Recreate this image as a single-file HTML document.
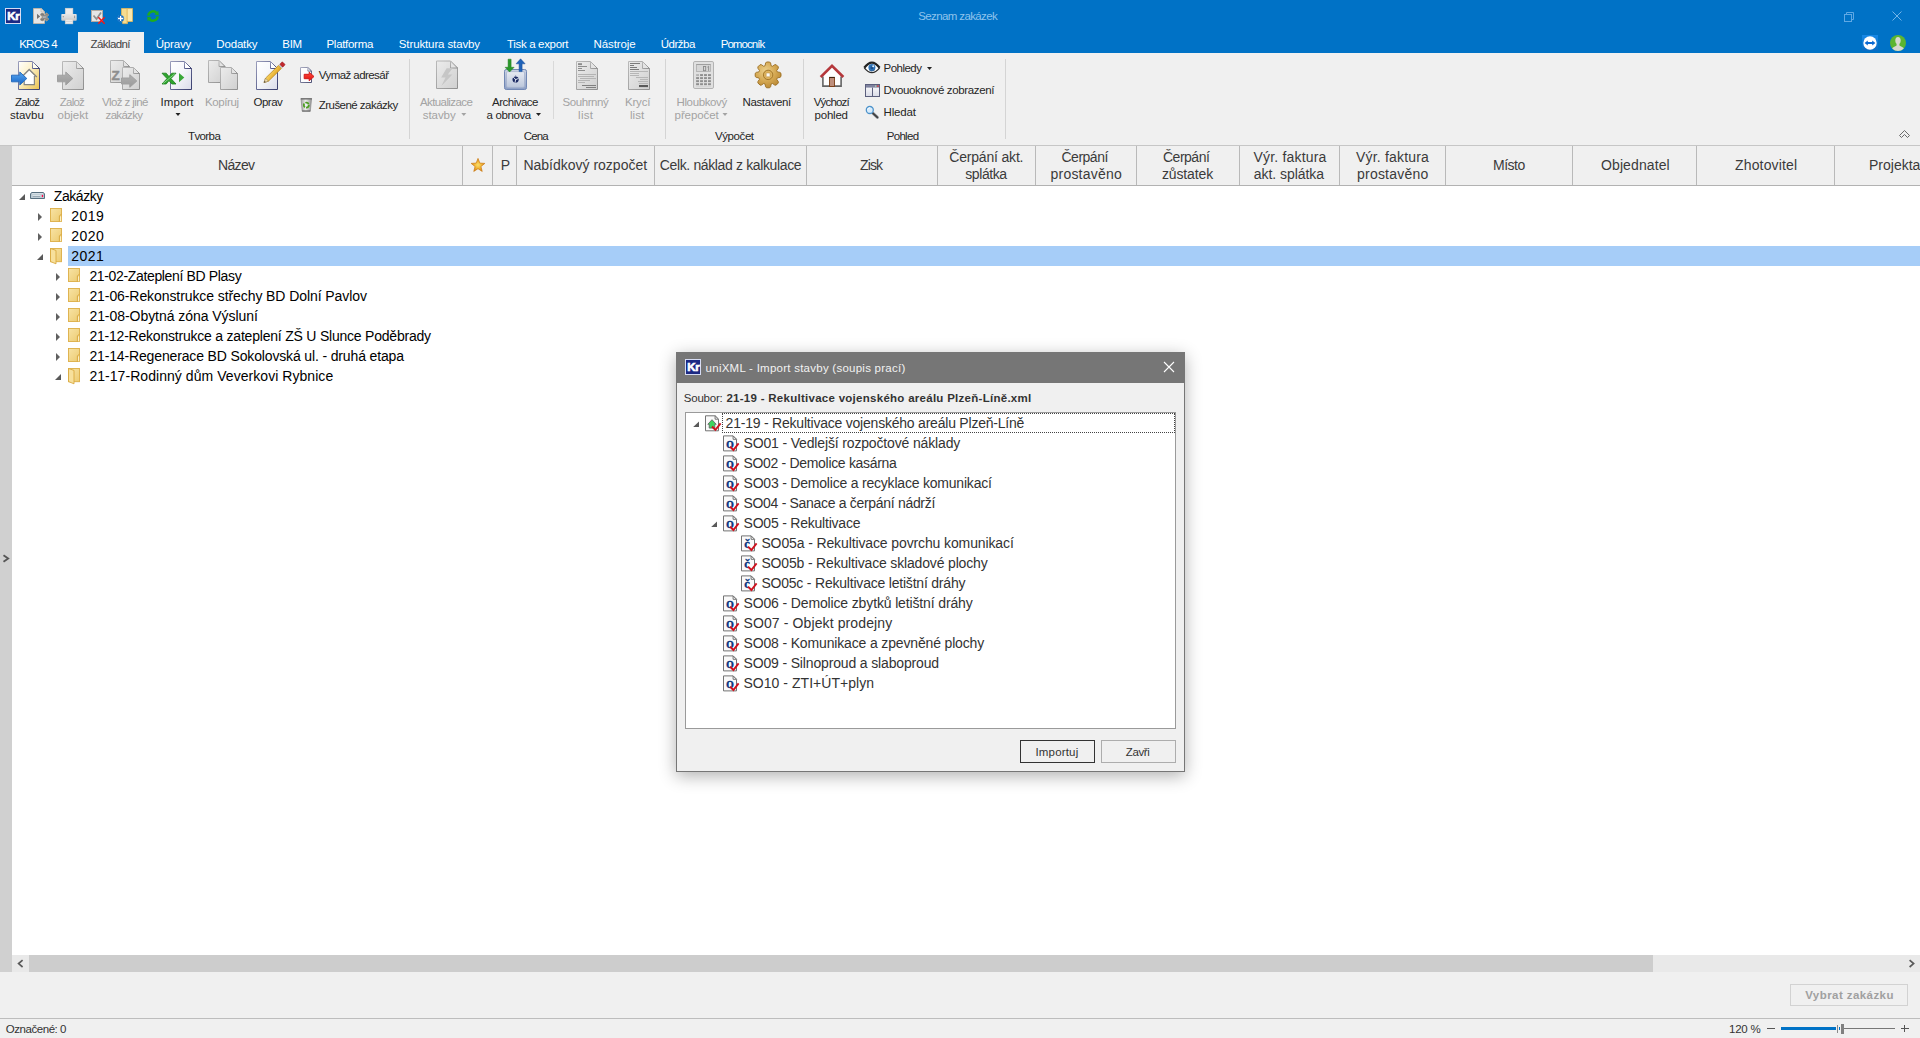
<!DOCTYPE html>
<html><head><meta charset="utf-8"><title>KROS 4</title>
<style>html,body{margin:0;padding:0;width:1920px;height:1038px;overflow:hidden;background:#f0f0f0;font-family:'Liberation Sans',sans-serif}</style>
</head><body>
<div style="position:relative;width:1920px;height:1038px;overflow:hidden">
<div style="position:absolute;left:0px;top:0px;width:1920px;height:53px;background:#0072c6;"></div>
<div style="position:absolute;left:0px;top:53px;width:1920px;height:92px;background:#f0f0f0;"></div>
<div style="position:absolute;left:0px;top:145px;width:1920px;height:1px;background:#c6c6c6;"></div>
<div style="position:absolute;left:78px;top:32px;width:66px;height:21px;background:#f0f0f0;"></div>
<div style="position:absolute;left:0px;top:146px;width:1920px;height:39px;background:#f0f0f0;"></div>
<div style="position:absolute;left:0px;top:185px;width:1920px;height:1px;background:#b2b2b2;"></div>
<div style="position:absolute;left:12px;top:186px;width:1908px;height:769px;background:#ffffff;"></div>
<div style="position:absolute;left:0px;top:146px;width:12px;height:826px;background:#d0d0d0;"></div>
<div style="position:absolute;left:68px;top:246px;width:1852px;height:20px;background:#a6cdf8;"></div>
<div style="position:absolute;left:12px;top:955px;width:1908px;height:17px;background:#e9e9e9;"></div>
<div style="position:absolute;left:29px;top:955px;width:1624px;height:17px;background:#cdcdcd;"></div>
<div style="position:absolute;left:0px;top:972px;width:1920px;height:46px;background:#f0f0f0;"></div>
<div style="position:absolute;left:0px;top:1018px;width:1920px;height:1px;background:#bdbdbd;"></div>
<div style="position:absolute;left:0px;top:1019px;width:1920px;height:19px;background:#f0f0f0;"></div>
<div style="position:absolute;left:409px;top:59px;width:1px;height:80px;background:#d4d4d4;"></div>
<div style="position:absolute;left:665px;top:59px;width:1px;height:80px;background:#d4d4d4;"></div>
<div style="position:absolute;left:803px;top:59px;width:1px;height:80px;background:#d4d4d4;"></div>
<div style="position:absolute;left:1005px;top:59px;width:1px;height:80px;background:#d4d4d4;"></div>
<div style="position:absolute;left:553px;top:61px;width:1px;height:58px;background:#d9d9d9;"></div>
<div style="position:absolute;left:462px;top:146px;width:1px;height:39px;background:#b9b9b9;"></div>
<div style="position:absolute;left:492px;top:146px;width:1px;height:39px;background:#b9b9b9;"></div>
<div style="position:absolute;left:516px;top:146px;width:1px;height:39px;background:#b9b9b9;"></div>
<div style="position:absolute;left:654px;top:146px;width:1px;height:39px;background:#b9b9b9;"></div>
<div style="position:absolute;left:806px;top:146px;width:1px;height:39px;background:#b9b9b9;"></div>
<div style="position:absolute;left:937px;top:146px;width:1px;height:39px;background:#b9b9b9;"></div>
<div style="position:absolute;left:1035px;top:146px;width:1px;height:39px;background:#b9b9b9;"></div>
<div style="position:absolute;left:1136px;top:146px;width:1px;height:39px;background:#b9b9b9;"></div>
<div style="position:absolute;left:1239px;top:146px;width:1px;height:39px;background:#b9b9b9;"></div>
<div style="position:absolute;left:1339px;top:146px;width:1px;height:39px;background:#b9b9b9;"></div>
<div style="position:absolute;left:1445px;top:146px;width:1px;height:39px;background:#b9b9b9;"></div>
<div style="position:absolute;left:1572px;top:146px;width:1px;height:39px;background:#b9b9b9;"></div>
<div style="position:absolute;left:1696px;top:146px;width:1px;height:39px;background:#b9b9b9;"></div>
<div style="position:absolute;left:1834px;top:146px;width:1px;height:39px;background:#b9b9b9;"></div>
<div style="position:absolute;left:1790px;top:984px;width:118px;height:22px;background:#f0f0f0;box-sizing:border-box;border:1px solid #d2d2d2"></div>
<div style="position:absolute;left:1767px;top:1028px;width:8px;height:1px;background:#555;"></div>
<div style="position:absolute;left:1781px;top:1027px;width:55px;height:3px;background:#0072c6;"></div>
<div style="position:absolute;left:1837px;top:1025px;width:1px;height:8px;background:#8a8a8a;"></div>
<div style="position:absolute;left:1839px;top:1027px;width:1px;height:3px;background:#0072c6;"></div>
<div style="position:absolute;left:1841px;top:1024px;width:3px;height:10px;background:#808080;"></div>
<div style="position:absolute;left:1844px;top:1028px;width:51px;height:1px;background:#777;"></div>
<div style="position:absolute;left:1901px;top:1028px;width:8px;height:1px;background:#555;"></div>
<div style="position:absolute;left:1904px;top:1025px;width:1px;height:7px;background:#555;"></div>
<svg style="position:absolute;left:0px;top:0px" width="1920" height="1038" viewBox="0 0 1920 1038"><defs>
<linearGradient id="gDoc" x1="0" y1="0" x2="1" y2="1"><stop offset="0" stop-color="#ffffff"/><stop offset="0.45" stop-color="#f6f7fb"/><stop offset="1" stop-color="#dadcea"/></linearGradient>
<linearGradient id="gGray" x1="0" y1="0" x2="1" y2="1"><stop offset="0" stop-color="#ececec"/><stop offset="1" stop-color="#d0d0d0"/></linearGradient>
<linearGradient id="gYel" x1="0" y1="0" x2="1" y2="1"><stop offset="0" stop-color="#ffffff"/><stop offset="0.4" stop-color="#fdf2cc"/><stop offset="1" stop-color="#ebc24e"/></linearGradient>
<linearGradient id="gBlueA" x1="0" y1="0" x2="0" y2="1"><stop offset="0" stop-color="#58a9f2"/><stop offset="1" stop-color="#1763c6"/></linearGradient>
<linearGradient id="gGrayA" x1="0" y1="0" x2="0" y2="1"><stop offset="0" stop-color="#b0b0b0"/><stop offset="1" stop-color="#9a9a9a"/></linearGradient>
<linearGradient id="gFold" x1="0" y1="0" x2="1" y2="1"><stop offset="0" stop-color="#f8e3a4"/><stop offset="1" stop-color="#eccb72"/></linearGradient>
<linearGradient id="gBox" x1="0" y1="0" x2="0" y2="1"><stop offset="0" stop-color="#cbd3e3"/><stop offset="1" stop-color="#8c9fc5"/></linearGradient>
<linearGradient id="gBox2" x1="0" y1="0" x2="0" y2="1"><stop offset="0" stop-color="#e6eaf2"/><stop offset="1" stop-color="#bcc7db"/></linearGradient>
<radialGradient id="gGear" cx="0.4" cy="0.35" r="0.75"><stop offset="0" stop-color="#ecd08c"/><stop offset="0.55" stop-color="#d3a650"/><stop offset="1" stop-color="#b48330"/></radialGradient>
<radialGradient id="gStar" cx="0.5" cy="0.5" r="0.55"><stop offset="0" stop-color="#f9de6c"/><stop offset="0.45" stop-color="#f2b83a"/><stop offset="1" stop-color="#d17c10"/></radialGradient>
<linearGradient id="gTrash" x1="0" y1="0" x2="1" y2="0"><stop offset="0" stop-color="#a4a4a4"/><stop offset="0.45" stop-color="#ededed"/><stop offset="1" stop-color="#969696"/></linearGradient>
<linearGradient id="gPen" x1="0" y1="0" x2="1" y2="1"><stop offset="0" stop-color="#fbd86a"/><stop offset="1" stop-color="#e2a520"/></linearGradient>
<linearGradient id="gTV" x1="0" y1="0" x2="0" y2="1"><stop offset="0" stop-color="#1788e6"/><stop offset="1" stop-color="#0a6cc2"/></linearGradient>
<linearGradient id="gSD" x1="0" y1="0" x2="1" y2="1"><stop offset="0" stop-color="#9c9fbd"/><stop offset="0.6" stop-color="#5a5f8c"/><stop offset="1" stop-color="#3a3f6e"/></linearGradient>
<linearGradient id="gSG" x1="0" y1="0" x2="1" y2="1"><stop offset="0" stop-color="#bababa"/><stop offset="1" stop-color="#8f8f8f"/></linearGradient>
<linearGradient id="gPane" x1="0" y1="0" x2="0" y2="1"><stop offset="0" stop-color="#ffffff"/><stop offset="1" stop-color="#d9dbe7"/></linearGradient>
<linearGradient id="gRed" x1="0" y1="0" x2="0" y2="1"><stop offset="0" stop-color="#ff4a3a"/><stop offset="1" stop-color="#e01212"/></linearGradient>
<linearGradient id="gSD2" x1="0" y1="0" x2="1" y2="1"><stop offset="0" stop-color="#a9abc0"/><stop offset="1" stop-color="#4e5276"/></linearGradient>
<linearGradient id="gPrn" x1="0" y1="0" x2="0" y2="1"><stop offset="0" stop-color="#e6e6e6"/><stop offset="0.55" stop-color="#dadada"/><stop offset="1" stop-color="#c6c6c6"/></linearGradient>
</defs><rect x="5" y="8" width="16" height="16" fill="#d5dbf3"/><rect x="6" y="9" width="14" height="14" fill="#1b2883"/><text x="7.2" y="20.4" style="font-family:'Liberation Sans',sans-serif;font-size:11.5px;font-weight:700;letter-spacing:-0.3px" fill="#fff" stroke="#fff" stroke-width="0.7">Kr</text><path d="M33.5 8.5H41.1L44.5 11.9V23.5H33.5Z" fill="#e6e6e6" stroke="#c4b5a6" stroke-width="0.9" stroke-linejoin="round"/><path d="M41.1 8.5V11.9H44.5Z" fill="#f4f4f4" stroke="#c4b5a6" stroke-width="0.9" stroke-linejoin="round"/><path d="M37 13.8L40.2 16.4L37 19Z" fill="#737373"/><path d="M41.2 13.8L47.8 20.2M47.8 13.8L41.2 20.2" stroke="#c9b08e" stroke-width="3.6"/><path d="M41.2 13.8L47.8 20.2M47.8 13.8L41.2 20.2" stroke="#858585" stroke-width="2.3"/><path d="M40.6 14.2H44M40.6 19.8H44" stroke="#7d7d7d" stroke-width="1.4"/><path d="M42.6 16.2L46.4 18.2M42.6 18L46.4 15.8" stroke="#c8d0d8" stroke-width="0.6"/><rect x="65.2" y="8.2" width="7.7" height="6" fill="#ececec" stroke="#d9cfc6" stroke-width="0.5"/><rect x="61.3" y="13.9" width="15.4" height="6.9" rx="0.8" fill="url(#gPrn)"/><rect x="62.8" y="16" width="0.9" height="1.3" fill="#8a8a8a"/><rect x="74.2" y="15.6" width="0.9" height="2.6" fill="#8f8f8f"/><rect x="65.2" y="19.6" width="7.7" height="4.3" fill="#efefef" stroke="#d9cfc6" stroke-width="0.5"/><path d="M65.6 21.4H72.6" stroke="#cfcfcf" stroke-width="0.7"/><rect x="91.5" y="10.5" width="11" height="11" fill="#e6e6e6" stroke="#b3aaa2"/><path d="M93.5 15.5L96.5 19L101 12.5" fill="none" stroke="#909090" stroke-width="1.7"/><path d="M98.3 17.3L104.7 23.7M104.7 17.3L98.3 23.7" stroke="#f01818" stroke-width="1.5"/><path d="M121.5 8.5H132.5V21.5H127.5V23.6H122.6V21.5H121.5Z" fill="#f6dc8f" stroke="#e3b95a" stroke-width="0.8"/><path d="M127.2 9V23" stroke="#dcae4c" stroke-width="0.9"/><path d="M127.7 9.2H132V21H127.7Z" fill="#fae8ad"/><circle cx="120.6" cy="18.5" r="3.3" fill="#0c66be" stroke="#6aaae6" stroke-width="0.6" stroke-dasharray="0.9 0.9"/><path d="M118 18.5H123.2M120.6 15.9V21.1" stroke="#fff" stroke-width="1.3"/><g fill="none" stroke="#1eac1e" stroke-width="2.4"><path d="M148.32 15.59A4.7 4.7 0 0 1 156.49 12.86"/><path d="M157.68 16.41A4.7 4.7 0 0 1 149.51 19.14"/></g><path d="M158.32 10.86L158.74 15.18L154.44 14.61Z" fill="#1eac1e"/><path d="M147.68 21.14L147.26 16.82L151.56 17.39Z" fill="#1eac1e"/><g fill="none" stroke="#5fa8e4" stroke-width="1"><rect x="1844.5" y="14.5" width="7" height="7"/><path d="M1846.5 14.5V12.5H1853.5V19.5H1851.5"/></g><path d="M1892.5 11.5L1901.5 20.5M1901.5 11.5L1892.5 20.5" stroke="#74b4e8" stroke-width="1"/><rect x="1862" y="35" width="16" height="16" fill="url(#gTV)"/><circle cx="1870" cy="43" r="6.7" fill="#fff"/><path d="M1864.6 43L1867.8 40.6V42.1H1872.2V40.6L1875.4 43L1872.2 45.4V43.9H1867.8V45.4Z" fill="#0b6ad2"/><circle cx="1898" cy="43" r="8" fill="#5bb431"/><clipPath id="cu"><circle cx="1898" cy="43" r="8"/></clipPath><g clip-path="url(#cu)" fill="#d8d8d0"><ellipse cx="1898" cy="40.6" rx="2.7" ry="3.5"/><path d="M1896.6 43V45.6C1895 46.6 1892.6 47 1891.8 49.4V52H1904.2V49.4C1903.4 47 1901 46.6 1899.4 45.6V43Z"/></g><g fill="none" stroke="#5a5a5a" stroke-width="0.9"><path d="M1899.5 135.5L1904.5 130.5L1909.5 135.5"/><path d="M1901.5 137.5L1904.5 134.5L1907.5 137.5"/><path d="M1899.5 135.5L1901.5 137.5M1909.5 135.5L1907.5 137.5"/></g><path d="M18.5 61.5H32.5L39.5 68.5V89.5H18.5Z" fill="url(#gYel)" stroke="url(#gSD)" stroke-width="1" stroke-linejoin="round"/><path d="M32.5 61.5V68.5H39.5Z" fill="#fffdf0" stroke="url(#gSD)" stroke-width="1" stroke-linejoin="round"/><path d="M24.2 75.6V84.6H34.4V75.6L29.2 70.4Z" fill="#fff"/><path d="M24.2 76V84.6H34.4V76" fill="none" stroke="#858585" stroke-width="1.2"/><path d="M23.2 75.6L29.2 69.4L36.8 77" fill="none" stroke="#858585" stroke-width="1.4"/><path d="M11.5 75.2H19.8V72.0L26.8 78.5L19.8 85.0V81.8H11.5Z" fill="url(#gBlueA)" stroke="#2a6fc0" stroke-width="1" stroke-linejoin="round"/><path d="M62.5 61.5H76.5L83.5 68.5V89.5H62.5Z" fill="url(#gGray)" stroke="url(#gSG)" stroke-width="1" stroke-linejoin="round"/><path d="M76.5 61.5V68.5H83.5Z" fill="#e4e4e4" stroke="url(#gSG)" stroke-width="1" stroke-linejoin="round"/><path d="M57.5 75.2H65.8V72.0L72.8 78.5L65.8 85.0V81.8H57.5Z" fill="url(#gGrayA)" stroke="#a0a0a0" stroke-width="1" stroke-linejoin="round"/><path d="M110.5 60.5H123.5L129.5 66.5V82.5H110.5Z" fill="url(#gGray)" stroke="url(#gSG)" stroke-width="1" stroke-linejoin="round"/><path d="M123.5 60.5V66.5H129.5Z" fill="#e4e4e4" stroke="url(#gSG)" stroke-width="1" stroke-linejoin="round"/><text x="111.4" y="80.2" style="font-family:'Liberation Sans',sans-serif;font-size:13.5px;font-weight:700" fill="#8e8e8e" stroke="#8e8e8e" stroke-width="0.4">Z</text><path d="M122.5 67.5H133.5L139.5 73.5V89.5H122.5Z" fill="url(#gGray)" stroke="url(#gSG)" stroke-width="1" stroke-linejoin="round"/><path d="M133.5 67.5V73.5H139.5Z" fill="#e4e4e4" stroke="url(#gSG)" stroke-width="1" stroke-linejoin="round"/><path d="M121.5 78H129.8V74.7L136.8 81L129.8 87.3V84H121.5Z" fill="url(#gGrayA)" stroke="#a0a0a0" stroke-width="1" stroke-linejoin="round"/><path d="M170.5 61.5H184.5L191.5 68.5V89.5H170.5Z" fill="url(#gDoc)" stroke="url(#gSD)" stroke-width="1" stroke-linejoin="round"/><path d="M184.5 61.5V68.5H191.5Z" fill="#ffffff" stroke="url(#gSD)" stroke-width="1" stroke-linejoin="round"/><path d="M162 73.2H166.2L169 76.6L171.8 73.2H176L171 78.6L176 84H171.8L169 80.6L166.2 84H162L167 78.6Z" fill="#2fa52f" stroke="#1b7d1b" stroke-width="0.8"/><path d="M163.2 83.4L174.8 73.8" stroke="#8fd98f" stroke-width="0.9"/><path d="M179 73L184.3 77.6L179 82.2Z" fill="#3aa83a"/><path d="M175.5 113H180.5L178 116Z" fill="#222"/><path d="M208.5 60.5H219.0L225.0 66.5V82.5H208.5Z" fill="url(#gGray)" stroke="url(#gSG)" stroke-width="1" stroke-linejoin="round"/><path d="M219.0 60.5V66.5H225.0Z" fill="#e4e4e4" stroke="url(#gSG)" stroke-width="1" stroke-linejoin="round"/><path d="M220.5 67.5H231.5L237.5 73.5V89.5H220.5Z" fill="url(#gGray)" stroke="url(#gSG)" stroke-width="1" stroke-linejoin="round"/><path d="M231.5 67.5V73.5H237.5Z" fill="#e4e4e4" stroke="url(#gSG)" stroke-width="1" stroke-linejoin="round"/><path d="M256.5 61.5H270.5L277.5 68.5V89.5H256.5Z" fill="url(#gDoc)" stroke="url(#gSD)" stroke-width="1" stroke-linejoin="round"/><path d="M270.5 61.5V68.5H277.5Z" fill="#ffffff" stroke="url(#gSD)" stroke-width="1" stroke-linejoin="round"/><g transform="translate(264 82.6) rotate(-44.5)"><path d="M0 0L4.2 -2.1H22.5V2.1H4.2Z" fill="url(#gPen)" stroke="#b5841e" stroke-width="0.7"/><path d="M0 0L4.2 -2.1V2.1Z" fill="#f1dcae" stroke="#8a7a5a" stroke-width="0.5"/><path d="M0 0L1.6 -0.8V0.8Z" fill="#333"/><rect x="22.5" y="-2.1" width="1.6" height="4.2" fill="#c9c9c9"/><rect x="24.1" y="-2.1" width="3.6" height="4.2" rx="0.8" fill="#c2272d" stroke="#8f1519" stroke-width="0.5"/></g><path d="M436.5 61H450.5L457.5 68V88.5H436.5Z" fill="url(#gGray)" stroke="url(#gSG)" stroke-width="1" stroke-linejoin="round"/><path d="M450.5 61V68H457.5Z" fill="#e4e4e4" stroke="url(#gSG)" stroke-width="1" stroke-linejoin="round"/><path d="M446.6 68.2H452.6L447.8 74.6H452.4L441.4 86L445.6 77.4H441.2Z" fill="#c6c6c6"/><path d="M461.3 113H466.3L463.8 116Z" fill="#a3a3a3"/><rect x="504.5" y="69.5" width="22" height="20" rx="1.8" fill="url(#gBox)" stroke="#7288b4"/><rect x="506.5" y="71.6" width="18" height="15.8" rx="1.4" fill="url(#gBox2)" stroke="#a3b0cb" stroke-width="0.7"/><circle cx="515.6" cy="79.6" r="3.1" fill="#1c2a63"/><path d="M515.6 79.6L513.2 77M515.6 79.6L518.6 78.4M515.6 79.6L515 82.8" stroke="#d5dceb" stroke-width="1"/><circle cx="515.6" cy="79.6" r="0.8" fill="#d5dceb"/><path d="M515.6 75.4V76.6" stroke="#3a4a88" stroke-width="0.6"/><path d="M508.1 59.2H511.1V67.3H514.1L509.6 72L505.1 67.3H508.1Z" fill="#2a982a" stroke="#1f7f1f" stroke-width="0.5"/><path d="M519.1 71.6V63.8H516.1L520.6 58.8L525.1 63.8H522.1V71.6Z" fill="#1f62b8" stroke="#184f98" stroke-width="0.5"/><path d="M536.0 113H541.0L538.5 116Z" fill="#222"/><path d="M576.5 61.5H590.5L597.5 68.5V89.5H576.5Z" fill="url(#gGray)" stroke="url(#gSG)" stroke-width="1" stroke-linejoin="round"/><path d="M590.5 61.5V68.5H597.5Z" fill="#e4e4e4" stroke="url(#gSG)" stroke-width="1" stroke-linejoin="round"/><rect x="578" y="63.2" width="4" height="1.9" fill="#8c8c8c"/><path d="M578 66.5H587M578 68.5H582M578 70.5H585" stroke="#8e8e8e" stroke-width="1"/><path d="M578 74.5H596M578 76.5H594M580 78.5H596M578 80.5H590M578 82.5H585" stroke="#b4b4b4" stroke-width="1"/><path d="M582 85.5H596M586 87.5H596" stroke="#808080" stroke-width="1.1"/><path d="M628.5 61.5H642.5L649.5 68.5V89.5H628.5Z" fill="url(#gGray)" stroke="url(#gSG)" stroke-width="1" stroke-linejoin="round"/><path d="M642.5 61.5V68.5H649.5Z" fill="#e4e4e4" stroke="url(#gSG)" stroke-width="1" stroke-linejoin="round"/><path d="M630 63.5H640M630 65.5H634M630 67.5H637M630 69.5H639" stroke="#7c7c7c" stroke-width="1.1"/><path d="M630 71.5H648M630 73.5H639M630 75.5H639" stroke="#b6b6b6" stroke-width="1"/><path d="M636 77.5H648M640 79.5H648M638 81.5H648M639 83.5H648" stroke="#b6b6b6" stroke-width="1"/><rect x="639" y="85" width="9" height="2.1" fill="#5a5a5a"/><rect x="693.5" y="61.5" width="20" height="27" rx="1.4" fill="#e0e0e0" stroke="#b3b3b3"/><rect x="696.5" y="64.5" width="14" height="7" fill="#d6d6d6" stroke="#adadad" stroke-width="0.8"/><path d="M696.5 64.5H710.5" stroke="#9c9c9c" stroke-width="0.9"/><g fill="none" stroke="#8a8a8a" stroke-width="0.9"><rect x="703.5" y="66.5" width="2.2" height="4.2"/><path d="M708.6 66.2V70.9M707.4 67.2L708.6 66.2"/></g><path d="M696 86.6H711" stroke="#d2d2d2" stroke-width="0.8"/><rect x="696.10" y="74.10" width="2.9" height="1.95" fill="#b4b4b4"/><rect x="700.07" y="74.10" width="2.9" height="1.95" fill="#8e8e8e"/><rect x="704.04" y="74.10" width="2.9" height="1.95" fill="#8e8e8e"/><rect x="708.01" y="74.10" width="2.9" height="1.95" fill="#8e8e8e"/><rect x="696.10" y="77.14" width="2.9" height="1.95" fill="#8e8e8e"/><rect x="700.07" y="77.14" width="2.9" height="1.95" fill="#8e8e8e"/><rect x="704.04" y="77.14" width="2.9" height="1.95" fill="#8e8e8e"/><rect x="708.01" y="77.14" width="2.9" height="1.95" fill="#8e8e8e"/><rect x="696.10" y="80.18" width="2.9" height="1.95" fill="#8e8e8e"/><rect x="700.07" y="80.18" width="2.9" height="1.95" fill="#8e8e8e"/><rect x="704.04" y="80.18" width="2.9" height="1.95" fill="#8e8e8e"/><rect x="708.01" y="80.18" width="2.9" height="1.95" fill="#8e8e8e"/><rect x="696.10" y="83.22" width="2.9" height="1.95" fill="#8e8e8e"/><rect x="700.07" y="83.22" width="2.9" height="1.95" fill="#8e8e8e"/><rect x="704.04" y="83.22" width="2.9" height="1.95" fill="#8e8e8e"/><rect x="708.01" y="83.22" width="2.9" height="1.95" fill="#8e8e8e"/><path d="M722.5 113H727.5L725 116Z" fill="#a3a3a3"/><path d="M771.06 84.14L770.62 86.73L769.66 87.81L766.54 87.81L765.58 86.73L765.14 84.14L763.66 83.52L761.52 85.05L760.07 85.13L757.87 82.93L757.95 81.48L759.48 79.34L758.86 77.86L756.27 77.42L755.19 76.46L755.19 73.34L756.27 72.38L758.86 71.94L759.48 70.46L757.95 68.32L757.87 66.87L760.07 64.67L761.52 64.75L763.66 66.28L765.14 65.66L765.58 63.07L766.54 61.99L769.66 61.99L770.62 63.07L771.06 65.66L772.54 66.28L774.68 64.75L776.13 64.67L778.33 66.87L778.25 68.32L776.72 70.46L777.34 71.94L779.93 72.38L781.01 73.34L781.01 76.46L779.93 77.42L777.34 77.86L776.72 79.34L778.25 81.48L778.33 82.93L776.13 85.13L774.68 85.05L772.54 83.52Z" fill="url(#gGear)" stroke="#9b6d20" stroke-width="0.9" stroke-linejoin="round"/><circle cx="768.1" cy="74.9" r="4.7" fill="#dcb25e" stroke="#a4782a" stroke-width="1"/><rect x="766.2" y="73.0" width="3.8" height="3.8" rx="0.4" fill="#fbfaf6" stroke="#b88a3a" stroke-width="0.5"/><path d="M822.9 76V86.1H841.1V76L832 67.4Z" fill="#fefefe"/><path d="M822.9 76.4V86.1H841.1V76.4" fill="none" stroke="#646464" stroke-width="1.6"/><rect x="829.5" y="77.6" width="5" height="8.9" fill="#be8f7c" stroke="#7a3c14" stroke-width="0.9"/><path d="M829.2 77.4H834.8" stroke="#3a1c0c" stroke-width="1"/><path d="M821.6 76.1L832 65.9L842.4 76.1" fill="none" stroke="#b5373b" stroke-width="2.7" stroke-linecap="square" stroke-linejoin="miter"/><path d="M300.5 67.5H307.9L311.5 71.1V82.5H300.5Z" fill="#fdfdfe" stroke="url(#gSD2)" stroke-width="1" stroke-linejoin="round"/><path d="M307.9 67.5V71.1H311.5Z" fill="#ffffff" stroke="url(#gSD2)" stroke-width="1" stroke-linejoin="round"/><path d="M304.2 74.3H309.2V72.2L314 76.5L309.2 80.8V78.7H304.2Z" fill="url(#gRed)" stroke="#d21a1a" stroke-width="1" stroke-linejoin="round"/><path d="M301 98.6H311.6L310.3 111.2H302.2Z" fill="url(#gTrash)" stroke="#7d7d7d" stroke-width="0.6"/><rect x="300.7" y="98.2" width="11.2" height="1.3" fill="#6e6e6e"/><path d="M302.2 111H310.3" stroke="#5a5a5a" stroke-width="1"/><circle cx="306.3" cy="105.1" r="2.5" fill="#efedf6" stroke="#4d9e22" stroke-width="1.8" stroke-dasharray="4.1 1.15"/><path d="M864.3 67.8Q871.9 57.6 879.6 67.8Q871.9 77.6 864.3 67.8Z" fill="#fff"/><circle cx="871.9" cy="67.6" r="3.5" fill="#2f74b8"/><path d="M869 69.2A3.5 3.5 0 0 0 875.2 68.6A3.2 3.2 0 0 1 869 69.2Z" fill="#164478"/><circle cx="871.9" cy="67.9" r="1.4" fill="#1b4f8c"/><circle cx="873.2" cy="66.3" r="1" fill="#e6f0fb"/><path d="M864.3 67.8Q871.9 77.4 879.6 67.8" fill="none" stroke="#2c2c2c" stroke-width="1.3"/><path d="M864.3 67.8Q871.9 57.4 879.6 67.8" fill="none" stroke="#222" stroke-width="2.3"/><path d="M927.0 67H932.0L929.5 70Z" fill="#222"/><rect x="865.5" y="84.5" width="14" height="12" fill="url(#gPane)" stroke="#5b5f7d"/><rect x="866" y="85" width="13" height="2.6" fill="#7f839f"/><rect x="875" y="85.4" width="1.3" height="1.3" fill="#b9d4ad"/><rect x="877.2" y="85.4" width="1.4" height="1.4" fill="#ee2b2b"/><path d="M872.5 87.6V96.5" stroke="#5b5f7d"/><path d="M872.8 113.2L877.4 117.4" stroke="#9aa0a8" stroke-width="3" stroke-linecap="round"/><path d="M872.8 113.2L877.4 117.4" stroke="#3f3f3f" stroke-width="1.8" stroke-linecap="round"/><circle cx="869.8" cy="110" r="3.5" fill="#d9ecfb" stroke="#4d93cb" stroke-width="1.3"/><path d="M867.6 109.4Q868.2 107.6 870.2 107.6" fill="none" stroke="#fff" stroke-width="0.9"/><path d="M478.00 158.40L479.82 163.09L484.85 163.38L480.95 166.56L482.23 171.42L478.00 168.70L473.77 171.42L475.05 166.56L471.15 163.38L476.18 163.09Z" fill="url(#gStar)" stroke="#cc7a12" stroke-width="0.7" stroke-linejoin="round"/><path d="M3.5 555.2L8.2 558.5L3.5 561.8" fill="none" stroke="#555" stroke-width="1.8"/><path d="M22.6 960.2L18.6 963.6L22.6 967" fill="none" stroke="#5a5a5a" stroke-width="1.7"/><path d="M1909.6 960.2L1913.6 963.6L1909.6 967" fill="none" stroke="#5a5a5a" stroke-width="1.7"/><path d="M25 194V200H19Z" fill="#595959"/><path d="M31.6 192.5H43.4L44.5 194V198.5H30.5V194Z" fill="#b5c5cf" stroke="#587080" stroke-width="1" stroke-linejoin="round"/><path d="M32 193.6H43" stroke="#dde5ea" stroke-width="0.9"/><rect x="31.6" y="194.7" width="11.8" height="3" fill="#c7d3da"/><path d="M32.6 196.3H40.2" stroke="#8c9eab" stroke-width="1"/><path d="M32.6 195.4H40.2" stroke="#e6ecf0" stroke-width="0.8"/><rect x="41.8" y="194.9" width="1.3" height="2.2" fill="#ff0a46"/><path d="M38 213L42 217L38 221Z" fill="#606060"/><rect x="50.5" y="208.5" width="11" height="13" fill="url(#gFold)" stroke="#dcae45" stroke-width="0.9"/><path d="M61.5 214.2L59.4 215.8V221.5" fill="none" stroke="#d7a63c" stroke-width="0.9"/><rect x="60" y="216.4" width="1.1" height="4.8" fill="#fbefc6"/><path d="M38 233L42 237L38 241Z" fill="#606060"/><rect x="50.5" y="228.5" width="11" height="13" fill="url(#gFold)" stroke="#dcae45" stroke-width="0.9"/><path d="M61.5 234.2L59.4 235.8V241.5" fill="none" stroke="#d7a63c" stroke-width="0.9"/><rect x="60" y="236.4" width="1.1" height="4.8" fill="#fbefc6"/><path d="M43 254V260H37Z" fill="#595959"/><rect x="50.5" y="248.5" width="11" height="13.2" fill="url(#gFold)" stroke="#dcae45" stroke-width="0.9"/><path d="M50.5 248.5L56 250.4V263.8L50.5 261.6Z" fill="#f7e09c" stroke="#d9a940" stroke-width="0.9" stroke-linejoin="round"/><path d="M56 273L60 277L56 281Z" fill="#606060"/><rect x="68.5" y="268.5" width="11" height="13" fill="url(#gFold)" stroke="#dcae45" stroke-width="0.9"/><path d="M79.5 274.2L77.4 275.8V281.5" fill="none" stroke="#d7a63c" stroke-width="0.9"/><rect x="78" y="276.4" width="1.1" height="4.8" fill="#fbefc6"/><path d="M56 293L60 297L56 301Z" fill="#606060"/><rect x="68.5" y="288.5" width="11" height="13" fill="url(#gFold)" stroke="#dcae45" stroke-width="0.9"/><path d="M79.5 294.2L77.4 295.8V301.5" fill="none" stroke="#d7a63c" stroke-width="0.9"/><rect x="78" y="296.4" width="1.1" height="4.8" fill="#fbefc6"/><path d="M56 313L60 317L56 321Z" fill="#606060"/><rect x="68.5" y="308.5" width="11" height="13" fill="url(#gFold)" stroke="#dcae45" stroke-width="0.9"/><path d="M79.5 314.2L77.4 315.8V321.5" fill="none" stroke="#d7a63c" stroke-width="0.9"/><rect x="78" y="316.4" width="1.1" height="4.8" fill="#fbefc6"/><path d="M56 333L60 337L56 341Z" fill="#606060"/><rect x="68.5" y="328.5" width="11" height="13" fill="url(#gFold)" stroke="#dcae45" stroke-width="0.9"/><path d="M79.5 334.2L77.4 335.8V341.5" fill="none" stroke="#d7a63c" stroke-width="0.9"/><rect x="78" y="336.4" width="1.1" height="4.8" fill="#fbefc6"/><path d="M56 353L60 357L56 361Z" fill="#606060"/><rect x="68.5" y="348.5" width="11" height="13" fill="url(#gFold)" stroke="#dcae45" stroke-width="0.9"/><path d="M79.5 354.2L77.4 355.8V361.5" fill="none" stroke="#d7a63c" stroke-width="0.9"/><rect x="78" y="356.4" width="1.1" height="4.8" fill="#fbefc6"/><path d="M61 374V380H55Z" fill="#595959"/><rect x="68.5" y="368.5" width="11" height="13.2" fill="url(#gFold)" stroke="#dcae45" stroke-width="0.9"/><path d="M68.5 368.5L74 370.4V383.8L68.5 381.6Z" fill="#f7e09c" stroke="#d9a940" stroke-width="0.9" stroke-linejoin="round"/></svg>
<div style="position:absolute;left:676px;top:352px;width:509px;height:420px;background:#f0f0f0;box-sizing:border-box;border:1px solid #767676;box-shadow:0 4px 16px rgba(0,0,0,0.31)"></div>
<div style="position:absolute;left:676px;top:352px;width:509px;height:31px;background:#767676;"></div>
<div style="position:absolute;left:685px;top:412px;width:491px;height:317px;background:#fff;box-sizing:border-box;border:1px solid #9a9a9a"></div>
<div style="position:absolute;left:722px;top:413px;width:453px;height:20px;box-sizing:border-box;border:1px dotted #444"></div>
<div style="position:absolute;left:1020px;top:740px;width:75px;height:23px;background:#f0f0f0;box-sizing:border-box;border:1px solid #333"></div>
<div style="position:absolute;left:1101px;top:740px;width:75px;height:23px;background:#f0f0f0;box-sizing:border-box;border:1px solid #adadad"></div>
<svg style="position:absolute;left:0px;top:0px" width="1920" height="1038" viewBox="0 0 1920 1038"><rect x="685" y="359" width="16" height="16" fill="#d5dbf3"/><rect x="686" y="360" width="14" height="14" fill="#1b2883"/><text x="687.2" y="371.4" style="font-family:'Liberation Sans',sans-serif;font-size:11.5px;font-weight:700;letter-spacing:-0.3px" fill="#fff" stroke="#fff" stroke-width="0.7">Kr</text><path d="M1164 362L1174 372M1174 362L1164 372" stroke="#fff" stroke-width="1.1"/><path d="M699 421.5V427H693.2Z" fill="#595959"/><path d="M705.5 415.8H715.1L718.5 419.2V430.8H705.5Z" fill="#fafafa" stroke="#737373" stroke-width="1" stroke-linejoin="round"/><path d="M715.1 415.8V419.2H718.5Z" fill="#ffffff" stroke="#737373" stroke-width="1" stroke-linejoin="round"/><path d="M707.8 424.3L712 419.7L716.2 424.3H714.8V428.1H709.2V424.3Z" fill="#3fd35f" stroke="#5e5e5e" stroke-width="0.8"/><path d="M712 426.5L715.4 429.90000000000003L720.6 423.3" fill="none" stroke="#d0121f" stroke-width="1.9"/><path d="M723.5 435.9H733.1L736.5 439.29999999999995V450.9H723.5Z" fill="#fafafa" stroke="#737373" stroke-width="1" stroke-linejoin="round"/><path d="M733.1 435.9V439.29999999999995H736.5Z" fill="#ffffff" stroke="#737373" stroke-width="1" stroke-linejoin="round"/><text x="726.3" y="447.59999999999997" style="font-family:'Liberation Serif',serif;font-size:9.6px;font-weight:700" fill="#06327c" stroke="#06327c" stroke-width="0.5">O</text><path d="M730 446.59999999999997L733.4 450.0L738.6 443.4" fill="none" stroke="#d0121f" stroke-width="1.9"/><path d="M723.5 455.9H733.1L736.5 459.29999999999995V470.9H723.5Z" fill="#fafafa" stroke="#737373" stroke-width="1" stroke-linejoin="round"/><path d="M733.1 455.9V459.29999999999995H736.5Z" fill="#ffffff" stroke="#737373" stroke-width="1" stroke-linejoin="round"/><text x="726.3" y="467.59999999999997" style="font-family:'Liberation Serif',serif;font-size:9.6px;font-weight:700" fill="#06327c" stroke="#06327c" stroke-width="0.5">O</text><path d="M730 466.59999999999997L733.4 470.0L738.6 463.4" fill="none" stroke="#d0121f" stroke-width="1.9"/><path d="M723.5 475.9H733.1L736.5 479.29999999999995V490.9H723.5Z" fill="#fafafa" stroke="#737373" stroke-width="1" stroke-linejoin="round"/><path d="M733.1 475.9V479.29999999999995H736.5Z" fill="#ffffff" stroke="#737373" stroke-width="1" stroke-linejoin="round"/><text x="726.3" y="487.59999999999997" style="font-family:'Liberation Serif',serif;font-size:9.6px;font-weight:700" fill="#06327c" stroke="#06327c" stroke-width="0.5">O</text><path d="M730 486.59999999999997L733.4 490.0L738.6 483.4" fill="none" stroke="#d0121f" stroke-width="1.9"/><path d="M723.5 495.9H733.1L736.5 499.29999999999995V510.9H723.5Z" fill="#fafafa" stroke="#737373" stroke-width="1" stroke-linejoin="round"/><path d="M733.1 495.9V499.29999999999995H736.5Z" fill="#ffffff" stroke="#737373" stroke-width="1" stroke-linejoin="round"/><text x="726.3" y="507.59999999999997" style="font-family:'Liberation Serif',serif;font-size:9.6px;font-weight:700" fill="#06327c" stroke="#06327c" stroke-width="0.5">O</text><path d="M730 506.59999999999997L733.4 510.0L738.6 503.4" fill="none" stroke="#d0121f" stroke-width="1.9"/><path d="M723.5 515.9H733.1L736.5 519.3V530.9H723.5Z" fill="#fafafa" stroke="#737373" stroke-width="1" stroke-linejoin="round"/><path d="M733.1 515.9V519.3H736.5Z" fill="#ffffff" stroke="#737373" stroke-width="1" stroke-linejoin="round"/><text x="726.3" y="527.6" style="font-family:'Liberation Serif',serif;font-size:9.6px;font-weight:700" fill="#06327c" stroke="#06327c" stroke-width="0.5">O</text><path d="M730 526.6L733.4 530.0L738.6 523.4" fill="none" stroke="#d0121f" stroke-width="1.9"/><path d="M717 521.5V527H711.2Z" fill="#595959"/><path d="M741.5 535.9H751.1L754.5 539.3V550.9H741.5Z" fill="#fafafa" stroke="#737373" stroke-width="1" stroke-linejoin="round"/><path d="M751.1 535.9V539.3H754.5Z" fill="#ffffff" stroke="#737373" stroke-width="1" stroke-linejoin="round"/><text x="744.2" y="547.8" style="font-family:'Liberation Serif',serif;font-size:12.5px;font-weight:700" fill="#06327c" stroke="#06327c" stroke-width="0.3">č</text><path d="M748 546.6L751.4 550.0L756.6 543.4" fill="none" stroke="#d0121f" stroke-width="1.9"/><path d="M741.5 555.9H751.1L754.5 559.3V570.9H741.5Z" fill="#fafafa" stroke="#737373" stroke-width="1" stroke-linejoin="round"/><path d="M751.1 555.9V559.3H754.5Z" fill="#ffffff" stroke="#737373" stroke-width="1" stroke-linejoin="round"/><text x="744.2" y="567.8" style="font-family:'Liberation Serif',serif;font-size:12.5px;font-weight:700" fill="#06327c" stroke="#06327c" stroke-width="0.3">č</text><path d="M748 566.6L751.4 570.0L756.6 563.4" fill="none" stroke="#d0121f" stroke-width="1.9"/><path d="M741.5 575.9H751.1L754.5 579.3V590.9H741.5Z" fill="#fafafa" stroke="#737373" stroke-width="1" stroke-linejoin="round"/><path d="M751.1 575.9V579.3H754.5Z" fill="#ffffff" stroke="#737373" stroke-width="1" stroke-linejoin="round"/><text x="744.2" y="587.8" style="font-family:'Liberation Serif',serif;font-size:12.5px;font-weight:700" fill="#06327c" stroke="#06327c" stroke-width="0.3">č</text><path d="M748 586.6L751.4 590.0L756.6 583.4" fill="none" stroke="#d0121f" stroke-width="1.9"/><path d="M723.5 595.9H733.1L736.5 599.3V610.9H723.5Z" fill="#fafafa" stroke="#737373" stroke-width="1" stroke-linejoin="round"/><path d="M733.1 595.9V599.3H736.5Z" fill="#ffffff" stroke="#737373" stroke-width="1" stroke-linejoin="round"/><text x="726.3" y="607.6" style="font-family:'Liberation Serif',serif;font-size:9.6px;font-weight:700" fill="#06327c" stroke="#06327c" stroke-width="0.5">O</text><path d="M730 606.6L733.4 610.0L738.6 603.4" fill="none" stroke="#d0121f" stroke-width="1.9"/><path d="M723.5 615.9H733.1L736.5 619.3V630.9H723.5Z" fill="#fafafa" stroke="#737373" stroke-width="1" stroke-linejoin="round"/><path d="M733.1 615.9V619.3H736.5Z" fill="#ffffff" stroke="#737373" stroke-width="1" stroke-linejoin="round"/><text x="726.3" y="627.6" style="font-family:'Liberation Serif',serif;font-size:9.6px;font-weight:700" fill="#06327c" stroke="#06327c" stroke-width="0.5">O</text><path d="M730 626.6L733.4 630.0L738.6 623.4" fill="none" stroke="#d0121f" stroke-width="1.9"/><path d="M723.5 635.9H733.1L736.5 639.3V650.9H723.5Z" fill="#fafafa" stroke="#737373" stroke-width="1" stroke-linejoin="round"/><path d="M733.1 635.9V639.3H736.5Z" fill="#ffffff" stroke="#737373" stroke-width="1" stroke-linejoin="round"/><text x="726.3" y="647.6" style="font-family:'Liberation Serif',serif;font-size:9.6px;font-weight:700" fill="#06327c" stroke="#06327c" stroke-width="0.5">O</text><path d="M730 646.6L733.4 650.0L738.6 643.4" fill="none" stroke="#d0121f" stroke-width="1.9"/><path d="M723.5 655.9H733.1L736.5 659.3V670.9H723.5Z" fill="#fafafa" stroke="#737373" stroke-width="1" stroke-linejoin="round"/><path d="M733.1 655.9V659.3H736.5Z" fill="#ffffff" stroke="#737373" stroke-width="1" stroke-linejoin="round"/><text x="726.3" y="667.6" style="font-family:'Liberation Serif',serif;font-size:9.6px;font-weight:700" fill="#06327c" stroke="#06327c" stroke-width="0.5">O</text><path d="M730 666.6L733.4 670.0L738.6 663.4" fill="none" stroke="#d0121f" stroke-width="1.9"/><path d="M723.5 675.9H733.1L736.5 679.3V690.9H723.5Z" fill="#fafafa" stroke="#737373" stroke-width="1" stroke-linejoin="round"/><path d="M733.1 675.9V679.3H736.5Z" fill="#ffffff" stroke="#737373" stroke-width="1" stroke-linejoin="round"/><text x="726.3" y="687.6" style="font-family:'Liberation Serif',serif;font-size:9.6px;font-weight:700" fill="#06327c" stroke="#06327c" stroke-width="0.5">O</text><path d="M730 686.6L733.4 690.0L738.6 683.4" fill="none" stroke="#d0121f" stroke-width="1.9"/></svg>
<span style="position:absolute;left:918.30px;top:10.0px;white-space:pre;font-family:'Liberation Sans',sans-serif;font-size:11.5px;font-weight:400;letter-spacing:-0.631px;color:#8fc3ec;line-height:normal">Seznam zakázek</span>
<span style="position:absolute;left:19.20px;top:38.0px;white-space:pre;font-family:'Liberation Sans',sans-serif;font-size:11.5px;font-weight:400;letter-spacing:-0.76px;color:#ffffff;line-height:normal">KROS 4</span>
<span style="position:absolute;left:155.70px;top:38.0px;white-space:pre;font-family:'Liberation Sans',sans-serif;font-size:11.5px;font-weight:400;letter-spacing:-0.18px;color:#ffffff;line-height:normal">Úpravy</span>
<span style="position:absolute;left:216.30px;top:38.0px;white-space:pre;font-family:'Liberation Sans',sans-serif;font-size:11.5px;font-weight:400;letter-spacing:-0.167px;color:#ffffff;line-height:normal">Dodatky</span>
<span style="position:absolute;left:282.30px;top:38.0px;white-space:pre;font-family:'Liberation Sans',sans-serif;font-size:11.5px;font-weight:400;letter-spacing:-0.3px;color:#ffffff;line-height:normal">BIM</span>
<span style="position:absolute;left:326.50px;top:38.0px;white-space:pre;font-family:'Liberation Sans',sans-serif;font-size:11.5px;font-weight:400;letter-spacing:-0.3px;color:#ffffff;line-height:normal">Platforma</span>
<span style="position:absolute;left:398.80px;top:38.0px;white-space:pre;font-family:'Liberation Sans',sans-serif;font-size:11.5px;font-weight:400;letter-spacing:-0.12px;color:#ffffff;line-height:normal">Struktura stavby</span>
<span style="position:absolute;left:507.00px;top:38.0px;white-space:pre;font-family:'Liberation Sans',sans-serif;font-size:11.5px;font-weight:400;letter-spacing:-0.333px;color:#ffffff;line-height:normal">Tisk a export</span>
<span style="position:absolute;left:593.60px;top:38.0px;white-space:pre;font-family:'Liberation Sans',sans-serif;font-size:11.5px;font-weight:400;letter-spacing:-0.114px;color:#ffffff;line-height:normal">Nástroje</span>
<span style="position:absolute;left:660.70px;top:38.0px;white-space:pre;font-family:'Liberation Sans',sans-serif;font-size:11.5px;font-weight:400;letter-spacing:-0.48px;color:#ffffff;line-height:normal">Údržba</span>
<span style="position:absolute;left:720.70px;top:38.0px;white-space:pre;font-family:'Liberation Sans',sans-serif;font-size:11.5px;font-weight:400;letter-spacing:-0.943px;color:#ffffff;line-height:normal">Pomocník</span>
<span style="position:absolute;left:90.60px;top:38.0px;white-space:pre;font-family:'Liberation Sans',sans-serif;font-size:11.5px;font-weight:400;letter-spacing:-0.6px;color:#444444;line-height:normal">Základní</span>
<span style="position:absolute;left:15.00px;top:96.0px;white-space:pre;font-family:'Liberation Sans',sans-serif;font-size:11.5px;font-weight:400;letter-spacing:-0.75px;color:#262626;line-height:normal">Založ</span>
<span style="position:absolute;left:10.00px;top:109.0px;white-space:pre;font-family:'Liberation Sans',sans-serif;font-size:11.5px;font-weight:400;letter-spacing:0.0px;color:#262626;line-height:normal">stavbu</span>
<span style="position:absolute;left:59.75px;top:96.0px;white-space:pre;font-family:'Liberation Sans',sans-serif;font-size:11.5px;font-weight:400;letter-spacing:-0.75px;color:#a3a3a3;line-height:normal">Založ</span>
<span style="position:absolute;left:57.50px;top:109.0px;white-space:pre;font-family:'Liberation Sans',sans-serif;font-size:11.5px;font-weight:400;letter-spacing:0.0px;color:#a3a3a3;line-height:normal">objekt</span>
<span style="position:absolute;left:102.00px;top:96.0px;white-space:pre;font-family:'Liberation Sans',sans-serif;font-size:11.5px;font-weight:400;letter-spacing:-0.6px;color:#a3a3a3;line-height:normal">Vlož z jiné</span>
<span style="position:absolute;left:105.60px;top:109.0px;white-space:pre;font-family:'Liberation Sans',sans-serif;font-size:11.5px;font-weight:400;letter-spacing:-0.7px;color:#a3a3a3;line-height:normal">zakázky</span>
<span style="position:absolute;left:160.60px;top:96.0px;white-space:pre;font-family:'Liberation Sans',sans-serif;font-size:11.5px;font-weight:400;letter-spacing:0.06px;color:#262626;line-height:normal">Import</span>
<span style="position:absolute;left:205.00px;top:96.0px;white-space:pre;font-family:'Liberation Sans',sans-serif;font-size:11.5px;font-weight:400;letter-spacing:-0.417px;color:#a3a3a3;line-height:normal">Kopíruj</span>
<span style="position:absolute;left:253.50px;top:96.0px;white-space:pre;font-family:'Liberation Sans',sans-serif;font-size:11.5px;font-weight:400;letter-spacing:-0.5px;color:#262626;line-height:normal">Oprav</span>
<span style="position:absolute;left:420.00px;top:96.0px;white-space:pre;font-family:'Liberation Sans',sans-serif;font-size:11.5px;font-weight:400;letter-spacing:-0.6px;color:#a3a3a3;line-height:normal">Aktualizace</span>
<span style="position:absolute;left:422.75px;top:109.0px;white-space:pre;font-family:'Liberation Sans',sans-serif;font-size:11.5px;font-weight:400;letter-spacing:-0.06px;color:#a3a3a3;line-height:normal">stavby</span>
<span style="position:absolute;left:492.00px;top:96.0px;white-space:pre;font-family:'Liberation Sans',sans-serif;font-size:11.5px;font-weight:400;letter-spacing:-0.5px;color:#262626;line-height:normal">Archivace</span>
<span style="position:absolute;left:486.60px;top:109.0px;white-space:pre;font-family:'Liberation Sans',sans-serif;font-size:11.5px;font-weight:400;letter-spacing:-0.386px;color:#262626;line-height:normal">a obnova</span>
<span style="position:absolute;left:562.50px;top:96.0px;white-space:pre;font-family:'Liberation Sans',sans-serif;font-size:11.5px;font-weight:400;letter-spacing:-0.429px;color:#a3a3a3;line-height:normal">Souhrnný</span>
<span style="position:absolute;left:578.00px;top:109.0px;white-space:pre;font-family:'Liberation Sans',sans-serif;font-size:11.5px;font-weight:400;letter-spacing:0.333px;color:#a3a3a3;line-height:normal">list</span>
<span style="position:absolute;left:625.00px;top:96.0px;white-space:pre;font-family:'Liberation Sans',sans-serif;font-size:11.5px;font-weight:400;letter-spacing:-0.2px;color:#a3a3a3;line-height:normal">Krycí</span>
<span style="position:absolute;left:630.00px;top:109.0px;white-space:pre;font-family:'Liberation Sans',sans-serif;font-size:11.5px;font-weight:400;letter-spacing:0.067px;color:#a3a3a3;line-height:normal">list</span>
<span style="position:absolute;left:676.50px;top:96.0px;white-space:pre;font-family:'Liberation Sans',sans-serif;font-size:11.5px;font-weight:400;letter-spacing:-0.375px;color:#a3a3a3;line-height:normal">Hloubkový</span>
<span style="position:absolute;left:674.60px;top:109.0px;white-space:pre;font-family:'Liberation Sans',sans-serif;font-size:11.5px;font-weight:400;letter-spacing:-0.1px;color:#a3a3a3;line-height:normal">přepočet</span>
<span style="position:absolute;left:742.50px;top:96.0px;white-space:pre;font-family:'Liberation Sans',sans-serif;font-size:11.5px;font-weight:400;letter-spacing:-0.375px;color:#262626;line-height:normal">Nastavení</span>
<span style="position:absolute;left:813.75px;top:96.0px;white-space:pre;font-family:'Liberation Sans',sans-serif;font-size:11.5px;font-weight:400;letter-spacing:-0.833px;color:#262626;line-height:normal">Výchozí</span>
<span style="position:absolute;left:814.60px;top:109.0px;white-space:pre;font-family:'Liberation Sans',sans-serif;font-size:11.5px;font-weight:400;letter-spacing:-0.24px;color:#262626;line-height:normal">pohled</span>
<span style="position:absolute;left:318.75px;top:69.0px;white-space:pre;font-family:'Liberation Sans',sans-serif;font-size:11.5px;font-weight:400;letter-spacing:-0.558px;color:#262626;line-height:normal">Vymaž adresář</span>
<span style="position:absolute;left:318.75px;top:99.0px;white-space:pre;font-family:'Liberation Sans',sans-serif;font-size:11.5px;font-weight:400;letter-spacing:-0.536px;color:#262626;line-height:normal">Zrušené zakázky</span>
<span style="position:absolute;left:883.60px;top:62.0px;white-space:pre;font-family:'Liberation Sans',sans-serif;font-size:11.5px;font-weight:400;letter-spacing:-0.533px;color:#262626;line-height:normal">Pohledy</span>
<span style="position:absolute;left:883.60px;top:84.0px;white-space:pre;font-family:'Liberation Sans',sans-serif;font-size:11.5px;font-weight:400;letter-spacing:-0.353px;color:#262626;line-height:normal">Dvouoknové zobrazení</span>
<span style="position:absolute;left:883.60px;top:106.0px;white-space:pre;font-family:'Liberation Sans',sans-serif;font-size:11.5px;font-weight:400;letter-spacing:-0.2px;color:#262626;line-height:normal">Hledat</span>
<span style="position:absolute;left:188.00px;top:130.0px;white-space:pre;font-family:'Liberation Sans',sans-serif;font-size:11.5px;font-weight:400;letter-spacing:-0.6px;color:#262626;line-height:normal">Tvorba</span>
<span style="position:absolute;left:523.75px;top:130.0px;white-space:pre;font-family:'Liberation Sans',sans-serif;font-size:11.5px;font-weight:400;letter-spacing:-0.833px;color:#262626;line-height:normal">Cena</span>
<span style="position:absolute;left:715.00px;top:130.0px;white-space:pre;font-family:'Liberation Sans',sans-serif;font-size:11.5px;font-weight:400;letter-spacing:-0.417px;color:#262626;line-height:normal">Výpočet</span>
<span style="position:absolute;left:886.75px;top:130.0px;white-space:pre;font-family:'Liberation Sans',sans-serif;font-size:11.5px;font-weight:400;letter-spacing:-0.7px;color:#262626;line-height:normal">Pohled</span>
<span style="position:absolute;left:218.00px;top:157.0px;white-space:pre;font-family:'Liberation Sans',sans-serif;font-size:14px;font-weight:400;letter-spacing:-0.65px;color:#3b3b3b;line-height:normal">Název</span>
<span style="position:absolute;left:500.80px;top:157.0px;white-space:pre;font-family:'Liberation Sans',sans-serif;font-size:14px;font-weight:400;letter-spacing:0px;color:#3b3b3b;line-height:normal">P</span>
<span style="position:absolute;left:523.40px;top:157.0px;white-space:pre;font-family:'Liberation Sans',sans-serif;font-size:14px;font-weight:400;letter-spacing:0.0px;color:#3b3b3b;line-height:normal">Nabídkový rozpočet</span>
<span style="position:absolute;left:659.80px;top:157.0px;white-space:pre;font-family:'Liberation Sans',sans-serif;font-size:14px;font-weight:400;letter-spacing:-0.365px;color:#3b3b3b;line-height:normal">Celk. náklad z kalkulace</span>
<span style="position:absolute;left:860.00px;top:157.0px;white-space:pre;font-family:'Liberation Sans',sans-serif;font-size:14px;font-weight:400;letter-spacing:-0.867px;color:#3b3b3b;line-height:normal">Zisk</span>
<span style="position:absolute;left:949.25px;top:149.0px;white-space:pre;font-family:'Liberation Sans',sans-serif;font-size:14px;font-weight:400;letter-spacing:-0.182px;color:#3b3b3b;line-height:normal">Čerpání akt.</span>
<span style="position:absolute;left:965.25px;top:166.0px;white-space:pre;font-family:'Liberation Sans',sans-serif;font-size:14px;font-weight:400;letter-spacing:-0.417px;color:#3b3b3b;line-height:normal">splátka</span>
<span style="position:absolute;left:1061.50px;top:149.0px;white-space:pre;font-family:'Liberation Sans',sans-serif;font-size:14px;font-weight:400;letter-spacing:-0.5px;color:#3b3b3b;line-height:normal">Čerpání</span>
<span style="position:absolute;left:1050.50px;top:166.0px;white-space:pre;font-family:'Liberation Sans',sans-serif;font-size:14px;font-weight:400;letter-spacing:0.222px;color:#3b3b3b;line-height:normal">prostavěno</span>
<span style="position:absolute;left:1163.00px;top:149.0px;white-space:pre;font-family:'Liberation Sans',sans-serif;font-size:14px;font-weight:400;letter-spacing:-0.5px;color:#3b3b3b;line-height:normal">Čerpání</span>
<span style="position:absolute;left:1162.00px;top:166.0px;white-space:pre;font-family:'Liberation Sans',sans-serif;font-size:14px;font-weight:400;letter-spacing:-0.143px;color:#3b3b3b;line-height:normal">zůstatek</span>
<span style="position:absolute;left:1253.50px;top:149.0px;white-space:pre;font-family:'Liberation Sans',sans-serif;font-size:14px;font-weight:400;letter-spacing:0.182px;color:#3b3b3b;line-height:normal">Výr. faktura</span>
<span style="position:absolute;left:1253.70px;top:166.0px;white-space:pre;font-family:'Liberation Sans',sans-serif;font-size:14px;font-weight:400;letter-spacing:-0.036px;color:#3b3b3b;line-height:normal">akt. splátka</span>
<span style="position:absolute;left:1356.00px;top:149.0px;white-space:pre;font-family:'Liberation Sans',sans-serif;font-size:14px;font-weight:400;letter-spacing:0.182px;color:#3b3b3b;line-height:normal">Výr. faktura</span>
<span style="position:absolute;left:1357.00px;top:166.0px;white-space:pre;font-family:'Liberation Sans',sans-serif;font-size:14px;font-weight:400;letter-spacing:0.222px;color:#3b3b3b;line-height:normal">prostavěno</span>
<span style="position:absolute;left:1493.00px;top:157.0px;white-space:pre;font-family:'Liberation Sans',sans-serif;font-size:14px;font-weight:400;letter-spacing:-0.5px;color:#3b3b3b;line-height:normal">Místo</span>
<span style="position:absolute;left:1601.00px;top:157.0px;white-space:pre;font-family:'Liberation Sans',sans-serif;font-size:14px;font-weight:400;letter-spacing:0.111px;color:#3b3b3b;line-height:normal">Objednatel</span>
<span style="position:absolute;left:1735.00px;top:157.0px;white-space:pre;font-family:'Liberation Sans',sans-serif;font-size:14px;font-weight:400;letter-spacing:0.156px;color:#3b3b3b;line-height:normal">Zhotovitel</span>
<span style="position:absolute;left:1869.00px;top:157.0px;white-space:pre;font-family:'Liberation Sans',sans-serif;font-size:14px;font-weight:400;letter-spacing:0.0px;color:#3b3b3b;line-height:normal">Projektant</span>
<span style="position:absolute;left:53.75px;top:187.6px;white-space:pre;font-family:'Liberation Sans',sans-serif;font-size:14px;font-weight:400;letter-spacing:-0.417px;color:#000000;line-height:normal">Zakázky</span>
<span style="position:absolute;left:71.25px;top:207.6px;white-space:pre;font-family:'Liberation Sans',sans-serif;font-size:14px;font-weight:400;letter-spacing:0.5px;color:#000000;line-height:normal">2019</span>
<span style="position:absolute;left:71.25px;top:227.6px;white-space:pre;font-family:'Liberation Sans',sans-serif;font-size:14px;font-weight:400;letter-spacing:0.5px;color:#000000;line-height:normal">2020</span>
<span style="position:absolute;left:71.25px;top:247.6px;white-space:pre;font-family:'Liberation Sans',sans-serif;font-size:14px;font-weight:400;letter-spacing:0.5px;color:#000000;line-height:normal">2021</span>
<span style="position:absolute;left:89.40px;top:267.6px;white-space:pre;font-family:'Liberation Sans',sans-serif;font-size:14px;font-weight:400;letter-spacing:-0.348px;color:#000000;line-height:normal">21-02-Zateplení BD Plasy</span>
<span style="position:absolute;left:89.40px;top:287.6px;white-space:pre;font-family:'Liberation Sans',sans-serif;font-size:14px;font-weight:400;letter-spacing:-0.083px;color:#000000;line-height:normal">21-06-Rekonstrukce střechy BD Dolní Pavlov</span>
<span style="position:absolute;left:89.40px;top:307.6px;white-space:pre;font-family:'Liberation Sans',sans-serif;font-size:14px;font-weight:400;letter-spacing:-0.05px;color:#000000;line-height:normal">21-08-Obytná zóna Výsluní</span>
<span style="position:absolute;left:89.40px;top:327.6px;white-space:pre;font-family:'Liberation Sans',sans-serif;font-size:14px;font-weight:400;letter-spacing:-0.212px;color:#000000;line-height:normal">21-12-Rekonstrukce a zateplení ZŠ U Slunce Poděbrady</span>
<span style="position:absolute;left:89.40px;top:347.6px;white-space:pre;font-family:'Liberation Sans',sans-serif;font-size:14px;font-weight:400;letter-spacing:-0.145px;color:#000000;line-height:normal">21-14-Regenerace BD Sokolovská ul. - druhá etapa</span>
<span style="position:absolute;left:89.40px;top:367.6px;white-space:pre;font-family:'Liberation Sans',sans-serif;font-size:14px;font-weight:400;letter-spacing:0.053px;color:#000000;line-height:normal">21-17-Rodinný dům Veverkovi Rybnice</span>
<span style="position:absolute;left:705.60px;top:362.0px;white-space:pre;font-family:'Liberation Sans',sans-serif;font-size:11.5px;font-weight:400;letter-spacing:0.25px;color:#f2f2f2;line-height:normal">uniXML - Import stavby (soupis prací)</span>
<span style="position:absolute;left:683.75px;top:392.0px;white-space:pre;font-family:'Liberation Sans',sans-serif;font-size:11.5px;font-weight:400;letter-spacing:-0.217px;color:#333333;line-height:normal">Soubor:</span>
<span style="position:absolute;left:726.40px;top:392.0px;white-space:pre;font-family:'Liberation Sans',sans-serif;font-size:11.5px;font-weight:700;letter-spacing:0.275px;color:#333333;line-height:normal">21-19 - Rekultivace vojenského areálu Plzeň-Líně.xml</span>
<span style="position:absolute;left:725.60px;top:414.5px;white-space:pre;font-family:'Liberation Sans',sans-serif;font-size:14px;font-weight:400;letter-spacing:-0.217px;color:#333333;line-height:normal">21-19 - Rekultivace vojenského areálu Plzeň-Líně</span>
<span style="position:absolute;left:743.50px;top:434.5px;white-space:pre;font-family:'Liberation Sans',sans-serif;font-size:14px;font-weight:400;letter-spacing:-0.152px;color:#333333;line-height:normal">SO01 - Vedlejší rozpočtové náklady</span>
<span style="position:absolute;left:743.50px;top:454.5px;white-space:pre;font-family:'Liberation Sans',sans-serif;font-size:14px;font-weight:400;letter-spacing:-0.318px;color:#333333;line-height:normal">SO02 - Demolice kasárna</span>
<span style="position:absolute;left:743.50px;top:474.5px;white-space:pre;font-family:'Liberation Sans',sans-serif;font-size:14px;font-weight:400;letter-spacing:-0.205px;color:#333333;line-height:normal">SO03 - Demolice a recyklace komunikací</span>
<span style="position:absolute;left:743.50px;top:494.5px;white-space:pre;font-family:'Liberation Sans',sans-serif;font-size:14px;font-weight:400;letter-spacing:-0.31px;color:#333333;line-height:normal">SO04 - Sanace a čerpání nádrží</span>
<span style="position:absolute;left:743.50px;top:514.5px;white-space:pre;font-family:'Liberation Sans',sans-serif;font-size:14px;font-weight:400;letter-spacing:-0.212px;color:#333333;line-height:normal">SO05 - Rekultivace</span>
<span style="position:absolute;left:761.40px;top:534.5px;white-space:pre;font-family:'Liberation Sans',sans-serif;font-size:14px;font-weight:400;letter-spacing:-0.119px;color:#333333;line-height:normal">SO05a - Rekultivace povrchu komunikací</span>
<span style="position:absolute;left:761.40px;top:554.5px;white-space:pre;font-family:'Liberation Sans',sans-serif;font-size:14px;font-weight:400;letter-spacing:-0.165px;color:#333333;line-height:normal">SO05b - Rekultivace skladové plochy</span>
<span style="position:absolute;left:761.40px;top:574.5px;white-space:pre;font-family:'Liberation Sans',sans-serif;font-size:14px;font-weight:400;letter-spacing:-0.206px;color:#333333;line-height:normal">SO05c - Rekultivace letištní dráhy</span>
<span style="position:absolute;left:743.50px;top:594.5px;white-space:pre;font-family:'Liberation Sans',sans-serif;font-size:14px;font-weight:400;letter-spacing:-0.139px;color:#333333;line-height:normal">SO06 - Demolice zbytků letištní dráhy</span>
<span style="position:absolute;left:743.50px;top:614.5px;white-space:pre;font-family:'Liberation Sans',sans-serif;font-size:14px;font-weight:400;letter-spacing:0.114px;color:#333333;line-height:normal">SO07 - Objekt prodejny</span>
<span style="position:absolute;left:743.50px;top:634.5px;white-space:pre;font-family:'Liberation Sans',sans-serif;font-size:14px;font-weight:400;letter-spacing:-0.153px;color:#333333;line-height:normal">SO08 - Komunikace a zpevněné plochy</span>
<span style="position:absolute;left:743.50px;top:654.5px;white-space:pre;font-family:'Liberation Sans',sans-serif;font-size:14px;font-weight:400;letter-spacing:-0.152px;color:#333333;line-height:normal">SO09 - Silnoproud a slaboproud</span>
<span style="position:absolute;left:743.50px;top:674.5px;white-space:pre;font-family:'Liberation Sans',sans-serif;font-size:14px;font-weight:400;letter-spacing:0.035px;color:#333333;line-height:normal">SO10 - ZTI+ÚT+plyn</span>
<span style="position:absolute;left:1035.50px;top:746.0px;white-space:pre;font-family:'Liberation Sans',sans-serif;font-size:11.5px;font-weight:400;letter-spacing:0.171px;color:#333333;line-height:normal">Importuj</span>
<span style="position:absolute;left:1125.80px;top:746.0px;white-space:pre;font-family:'Liberation Sans',sans-serif;font-size:11.5px;font-weight:400;letter-spacing:-0.4px;color:#333333;line-height:normal">Zavři</span>
<span style="position:absolute;left:1805.20px;top:989.0px;white-space:pre;font-family:'Liberation Sans',sans-serif;font-size:11.5px;font-weight:700;letter-spacing:0.431px;color:#a0a0a0;line-height:normal">Vybrat zakázku</span>
<span style="position:absolute;left:5.70px;top:1023.0px;white-space:pre;font-family:'Liberation Sans',sans-serif;font-size:11.5px;font-weight:400;letter-spacing:-0.44px;color:#333333;line-height:normal">Označené: 0</span>
<span style="position:absolute;left:1729.00px;top:1023.0px;white-space:pre;font-family:'Liberation Sans',sans-serif;font-size:11.5px;font-weight:400;letter-spacing:-0.25px;color:#333333;line-height:normal">120 %</span>
</div>
</body></html>
